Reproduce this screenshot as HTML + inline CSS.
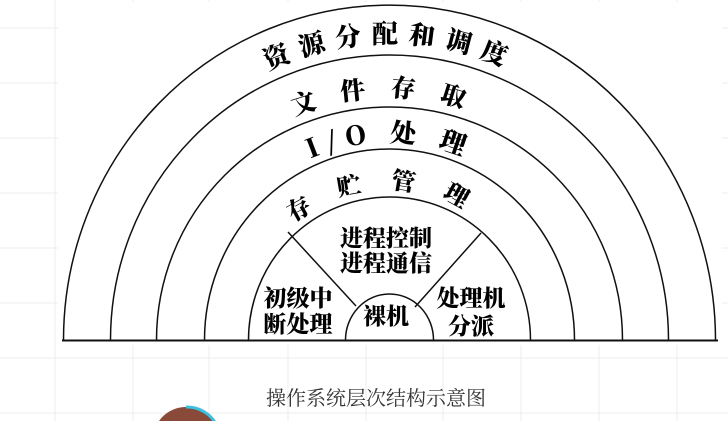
<!DOCTYPE html>
<html><head><meta charset="utf-8"><style>
html,body{margin:0;padding:0;background:#fff;width:728px;height:421px;overflow:hidden}
svg{display:block}
</style></head><body>
<svg width="728" height="421" viewBox="0 0 728 421" xmlns="http://www.w3.org/2000/svg" style="overflow:hidden">
<g stroke="#ececec" stroke-width="1">
<line x1="55" y1="0" x2="55" y2="421"/><line x1="133" y1="0" x2="133" y2="421"/><line x1="209" y1="0" x2="209" y2="421"/><line x1="288" y1="0" x2="288" y2="421"/><line x1="366" y1="0" x2="366" y2="421"/><line x1="443" y1="0" x2="443" y2="421"/><line x1="521" y1="0" x2="521" y2="421"/><line x1="599" y1="0" x2="599" y2="421"/><line x1="677" y1="0" x2="677" y2="421"/>
<line x1="0" y1="28" x2="728" y2="28"/><line x1="0" y1="83" x2="728" y2="83"/><line x1="0" y1="138" x2="728" y2="138"/><line x1="0" y1="193" x2="728" y2="193"/><line x1="0" y1="248" x2="728" y2="248"/><line x1="0" y1="303" x2="728" y2="303"/><line x1="0" y1="358" x2="728" y2="358"/><line x1="0" y1="413" x2="728" y2="413"/>
</g>
<rect x="58" y="2" width="664" height="343" fill="#fff"/>
<defs>
<path id="p1" d="M 100 340 A 290 297 0 0 1 680 340"/>
<path id="p2" d="M 147 340 A 243 243 0 0 1 633 340"/>
<path id="p3" d="M 192 340 A 198 198 0 0 1 588 340"/>
<path id="p4" d="M 238 340 A 152 150 0 0 1 542 340"/>
</defs>
<g fill="none" stroke="#111" stroke-width="1.5">
<path d="M 63.5 340 A 326 335 0 0 1 715.5 340"/>
<path d="M 110.5 340 A 279 285 0 0 1 668.5 340"/>
<path d="M 156.5 340 A 233 233 0 0 1 622.5 340"/>
<path d="M 204.5 340 A 185 191 0 0 1 574.5 340"/>
<path d="M 248.5 340 A 141 143 0 0 1 530.5 340"/>
<path d="M 345.5 340 A 44 46 0 0 1 433.5 340"/>
<line x1="288" y1="232" x2="356" y2="306"/>
<line x1="481" y1="233" x2="415" y2="307"/>
<line x1="62" y1="340.5" x2="718" y2="340.5" stroke-width="2"/>
</g>
<g font-family="'Noto Serif CJK SC','Liberation Serif',serif" font-weight="900" fill="#000" text-anchor="middle">
<text font-size="26" letter-spacing="10"><textPath href="#p1" startOffset="50%">资源分配和调度</textPath></text>
<text font-size="25" letter-spacing="24"><textPath href="#p2" startOffset="50%">文件存取</textPath></text>
<text font-size="26" letter-spacing="8"><textPath href="#p3" startOffset="50%">I/O 处 理</textPath></text>
<text font-size="24" letter-spacing="28"><textPath href="#p4" startOffset="50%">存贮管理</textPath></text>
<text font-size="23" x="386" y="246">进程控制</text>
<text font-size="23" x="386" y="271">进程通信</text>
<text font-size="23" x="298" y="306">初级中</text>
<text font-size="23" x="298" y="332">断处理</text>
<text font-size="23" x="386" y="324">裸机</text>
<text font-size="23" x="471" y="306">处理机</text>
<text font-size="23" x="471" y="334">分派</text>
</g>
<text x="376" y="405" font-family="'Noto Serif CJK SC','Liberation Serif',serif" font-size="20" fill="#333" text-anchor="middle">操作系统层次结构示意图</text>
<circle cx="186" cy="440" r="33" fill="#8a4a3a"/>
<path d="M 186 407 A 33 33 0 0 1 217 426" fill="none" stroke="#3cc0e0" stroke-width="3"/>
</svg>
</body></html>
